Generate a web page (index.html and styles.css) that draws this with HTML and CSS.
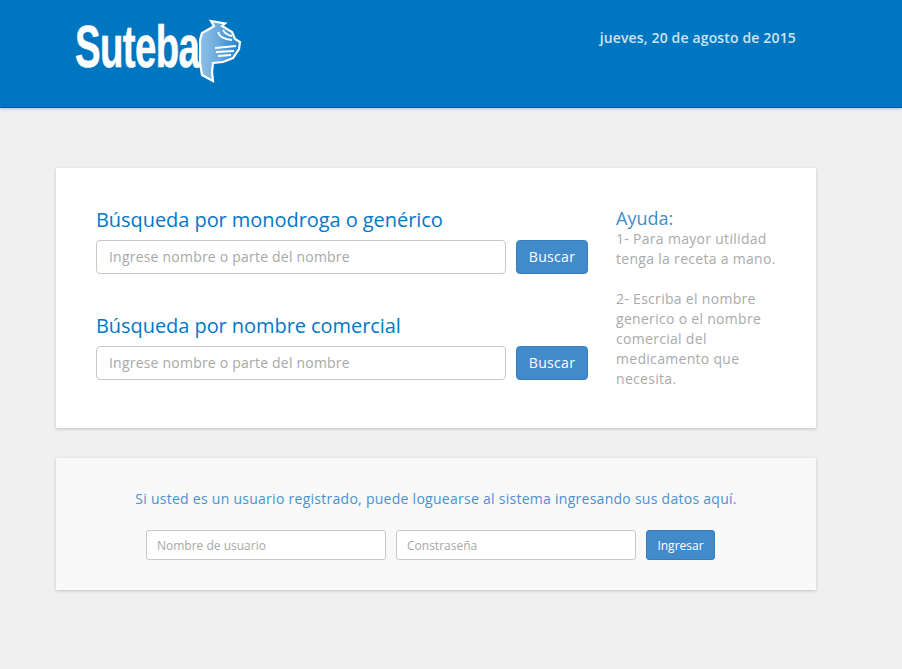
FILE: index.html
```html
<!DOCTYPE html>
<html lang="es">
<head>
<meta charset="utf-8">
<title>Suteba</title>
<link rel="stylesheet" href="styles.css">
</head>
<body>
<header class="topbar">
  <div class="logo">
    <span class="logo-text">Suteba</span>
    <svg class="logo-mark" width="44" height="64" viewBox="0 0 44 64">
      <defs>
        <linearGradient id="markFill" x1="0" y1="0" x2="1" y2="0">
          <stop offset="0" stop-color="#8fc0e8"/>
          <stop offset=".45" stop-color="#6aaade"/>
          <stop offset="1" stop-color="#1f84ca"/>
        </linearGradient>
      </defs>
      <path d="M12 2 L26 4.5 L23 7 L33 13 L36 20 L41 23 L40 30 L34 39 L24 43 L14 44 L13 53 L14 62 L3 56 L1 44 L1 21 L3 14 L12 9 L15 7 Z" fill="url(#markFill)" stroke="#fff" stroke-width="2.2"/>
      <path d="M19 13 Q21 20 33 21 M24 11 Q27 16 33 17" fill="none" stroke="#fff" stroke-width="1.8"/>
      <path d="M16 29 L37 27 M17 33 L35 32 M19 37 L32 36" fill="none" stroke="#fff" stroke-width="2.2"/>
    </svg>
  </div>
  <div class="date">jueves, 20 de agosto de 2015</div>
</header>
<main class="content">
  <section class="card search-card">
    <div class="search-col">
      <form class="search-form">
        <h2 class="search-title">Búsqueda por monodroga o genérico</h2>
        <div class="search-row">
          <input class="field" type="text" placeholder="Ingrese nombre o parte del nombre">
          <button class="btn" type="button">Buscar</button>
        </div>
      </form>
      <form class="search-form">
        <h2 class="search-title">Búsqueda por nombre comercial</h2>
        <div class="search-row">
          <input class="field" type="text" placeholder="Ingrese nombre o parte del nombre">
          <button class="btn" type="button">Buscar</button>
        </div>
      </form>
    </div>
    <aside class="help">
      <h3 class="help-title">Ayuda:</h3>
      <p class="help-text">1- Para mayor utilidad tenga la receta a mano.</p>
      <p class="help-text">2- Escriba el nombre generico o el nombre comercial del medicamento que necesita.</p>
    </aside>
  </section>
  <section class="card login-card">
    <p class="login-text">Si usted es un usuario registrado, puede loguearse al sistema ingresando sus datos aquí.</p>
    <form class="login-row">
      <input class="field field-sm" type="text" placeholder="Nombre de usuario">
      <input class="field field-sm" type="password" placeholder="Constraseña">
      <button class="btn btn-sm" type="button">Ingresar</button>
    </form>
  </section>
</main>
</body>
</html>
```
FILE: styles.css
```css
* { box-sizing: border-box; }
html, body { margin: 0; padding: 0; }
body {
  background: #f0f0f0;
  font-family: "Open Sans", sans-serif;
  min-height: 669px;
  overflow: hidden;
}
.topbar {
  height: 108px;
  background: #0076c0;
  border-bottom: 1px solid #0058a8;
  box-shadow: 0 1px 3px rgba(0,0,0,.2);
  padding: 19px 106px 0 75px;
  display: flex;
  justify-content: space-between;
  align-items: flex-start;
}
.logo { display: flex; align-items: flex-start; }
.logo-text {
  display: inline-block;
  width: 122px;
  font-family: "Liberation Sans", sans-serif;
  font-weight: 700;
  font-size: 60px;
  line-height: 56px;
  color: #fff;
  letter-spacing: -1px;
  white-space: nowrap;
  transform: scaleX(.64);
  transform-origin: left center;
  -webkit-text-stroke: .6px #fff;
}
.logo-mark { margin-left: 2px; }
.date {
  color: #cfe3f3;
  font-size: 14px;
  font-weight: 600;
  letter-spacing: .15px;
  line-height: 20px;
  margin-top: 9px;
}
.content {
  width: 760px;
  margin: 60px 0 0 56px;
  display: flex;
  flex-direction: column;
  gap: 30px;
}
.card { box-shadow: 0 1px 3px rgba(0,0,0,.2); }
.search-card {
  background: #fff;
  height: 260px;
  padding: 40px;
  display: flex;
  gap: 28px;
}
.search-col { width: 492px; display: flex; flex-direction: column; gap: 40px; }
.search-title {
  margin: -1px 0 7px;
  color: #0278c8;
  font-size: 20px;
  font-weight: 400;
  letter-spacing: -.06px;
  line-height: 26px;
}
.search-row { display: flex; gap: 10px; }
.field {
  display: block;
  width: 410px;
  height: 34px;
  padding: 0 12px 2px;
  border: 1px solid #c8c8c8;
  border-radius: 4px;
  background: #fff;
  font: 14px "Open Sans", sans-serif;
  letter-spacing: .21px;
  color: #555;
  outline: none;
}
.field::placeholder { color: #a8a8a8; opacity: 1; }
.btn {
  width: 72px;
  height: 34px;
  padding: 0 0 2px;
  background: #428bca;
  border: 1px solid #357ebd;
  border-radius: 4px;
  color: #fff;
  font: 14px "Open Sans", sans-serif;
  letter-spacing: .3px;
}
.help { flex: 1; }
.help-title {
  margin: 0;
  color: #428bca;
  font-size: 18px;
  font-weight: 400;
  line-height: 21px;
}
.help-text {
  margin: 0 0 20px;
  color: #aaa;
  font-size: 14px;
  letter-spacing: .3px;
  line-height: 20px;
}
.login-card {
  background: #f9f9f9;
  height: 132px;
  padding-top: 30px;
}
.login-text {
  margin: 0 0 20px;
  color: #4a90d0;
  font-size: 14px;
  letter-spacing: .27px;
  line-height: 22px;
  text-align: center;
}
.login-row { display: flex; gap: 10px; padding-left: 90px; }
.field-sm {
  width: 240px;
  height: 30px;
  padding: 0 10px;
  border-radius: 3px;
  font-size: 12px;
  letter-spacing: 0;
}
.btn-sm {
  width: 69px;
  height: 30px;
  padding: 0;
  border-radius: 3px;
  font-size: 12px;
  letter-spacing: 0;
}
```
